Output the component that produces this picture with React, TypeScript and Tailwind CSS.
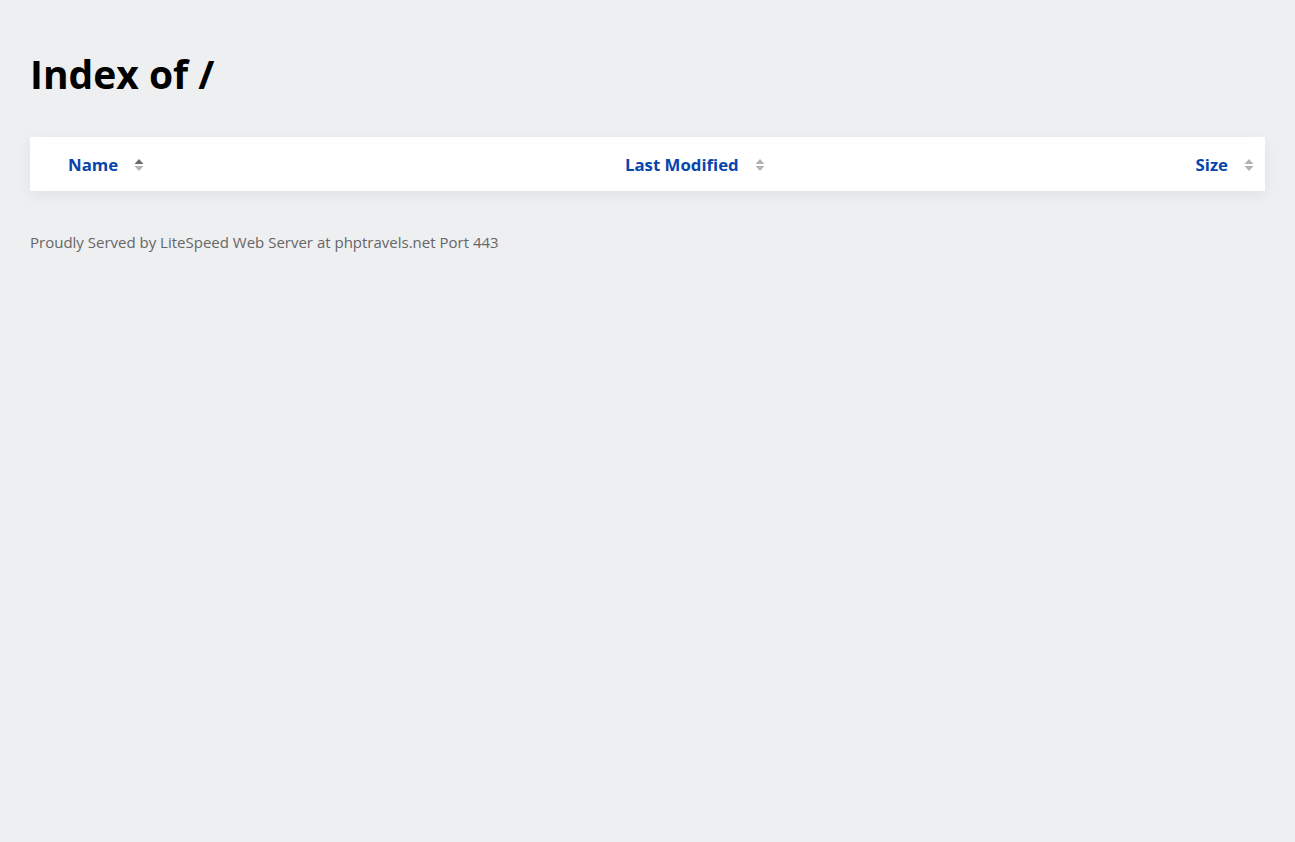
import React from "react";

function SortIcon({ active }: { active?: boolean }) {
  return (
    <svg width="10" height="14" viewBox="0 0 10 14" className="inline-block">
      <path d="M5 1 L9.5 6 L0.5 6 Z" fill={active ? "#6b6b6b" : "#b3b3b3"} />
      <path d="M5 13 L9.5 8 L0.5 8 Z" fill="#b3b3b3" />
    </svg>
  );
}

export default function App() {
  return (
    <div
      className="min-h-screen bg-[#eeeff1] px-[30px] pt-[49px] text-black"
      style={{ fontFamily: '"Open Sans", "Noto Sans", sans-serif' }}
    >
      <h1 className="text-[39px] font-bold leading-[50px]">Index of /</h1>

      <div className="mt-[38px] bg-white h-[54px] flex items-center pt-[2px] shadow-[0_4px_14px_rgba(0,0,0,0.06)]">
        <div className="w-[595px] flex items-center pl-[38px] gap-[16px]">
          <span className="text-[#0645ad] font-bold text-[16.8px]">Name</span>
          <SortIcon active />
        </div>
        <div className="flex-1 flex items-center gap-[16px]">
          <span className="text-[#0645ad] font-bold text-[16.8px]">Last Modified</span>
          <SortIcon />
        </div>
        <div className="w-[200px] flex items-center justify-end pr-[11px] gap-[16px]">
          <span className="text-[#0645ad] font-bold text-[16.8px]">Size</span>
          <SortIcon />
        </div>
      </div>

      <p className="mt-[40px] text-[15px] text-[#666666]">
        Proudly Served by LiteSpeed Web Server at phptravels.net Port 443
      </p>
    </div>
  );
}
